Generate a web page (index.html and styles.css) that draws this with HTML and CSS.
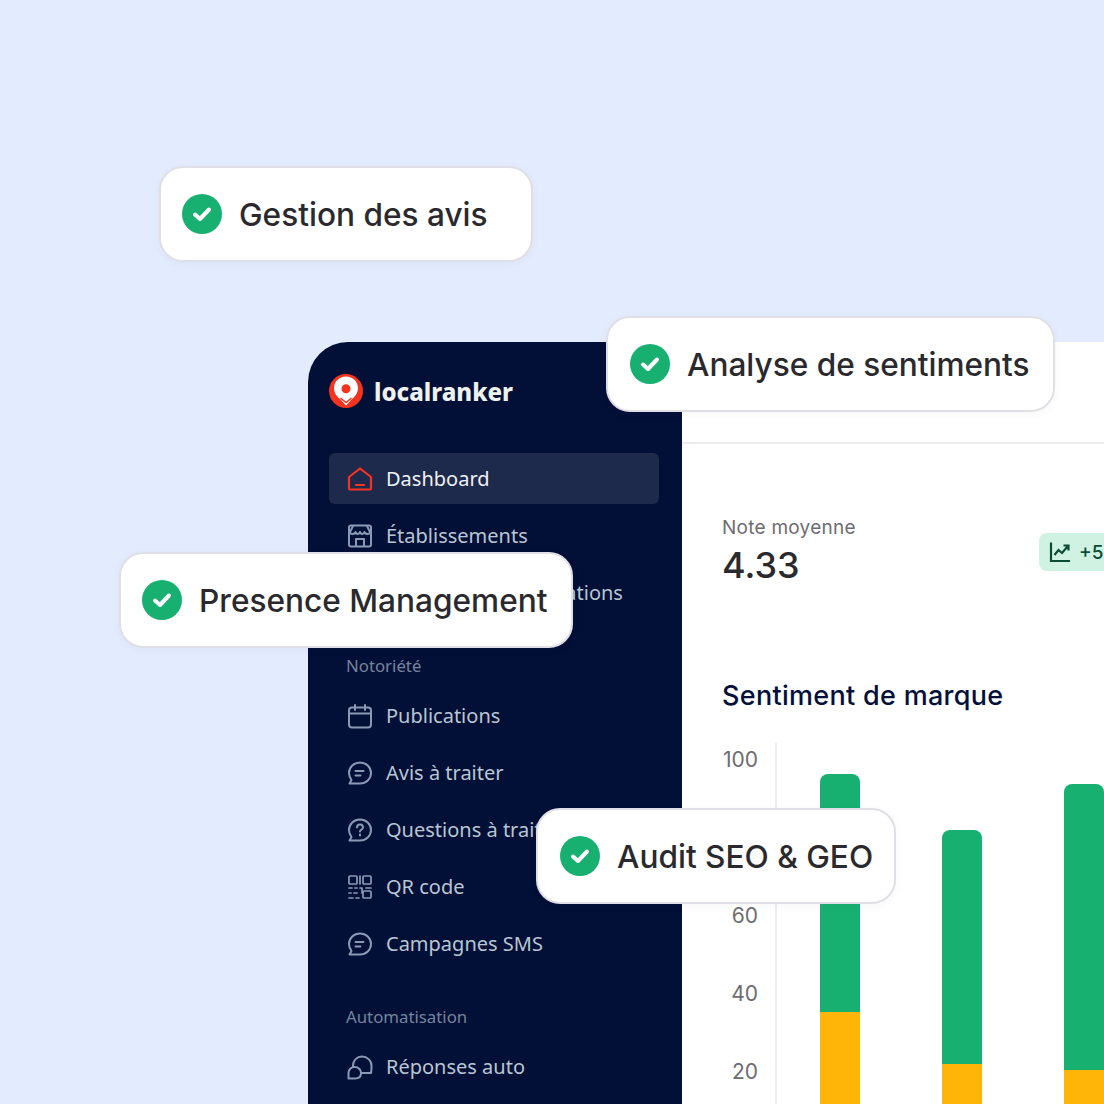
FILE: index.html
```html
<!DOCTYPE html>
<html lang="fr">
<head>
    <meta charset="UTF-8">
    <meta name="viewport" content="width=device-width, initial-scale=1.0">
    <title>Localranker</title>
    <link rel="stylesheet" href="styles.css">
</head>
<body>
    <div class="hero">
        <div class="app">
            <aside class="sidebar">
                <div class="logo">
                    <svg class="logo-mark" viewBox="0 0 34 34">
                        <circle cx="17" cy="17" r="17" fill="#f5331f"/>
                        <path d="M17 2.500c-6.600 0-12 5-12 11.500 0 5 3 8.500 6 11l6 6.500 6-6.500c3-2.500 6-6 6-11 0-6.500-5.400-11.500-12-11.500z" fill="#fff"/>
                        <circle cx="17" cy="14.700" r="4.500" fill="#f5331f"/>
                        <path d="M11.500 24l5.500 4.500 5.500-4.500" fill="none" stroke="#f5331f" stroke-width="1.500"/>
                    </svg>
                    <span>localranker</span>
                </div>
                <nav class="menu">
                    <a class="menu-item active" href="#">
                        <svg viewBox="0 0 26 26" class="icon"><path d="M2 11l11-8.500L24 11v11.500a1 1 0 0 1-1 1H3a1 1 0 0 1-1-1z M9 19h8"/></svg>
                        Dashboard
                    </a>
                    <a class="menu-item" href="#">
                        <svg viewBox="0 0 26 26" class="icon"><rect x="2" y="2.500" width="22" height="21" rx="2"/><path d="M6 3l-3 6c0 2.500 5 2.500 5.500 0C9 11.500 12.500 11.500 13 9c.5 2.500 4 2.500 4.500 0 .5 2.500 5.500 2.500 5.500 0l-3-6 M9 23v-7h8v7"/></svg>
                        Établissements
                    </a>
                    <a class="menu-item" href="#">
                        <svg viewBox="0 0 26 26" class="icon"><circle cx="13" cy="13" r="10"/></svg>
                        Gestion des informations
                    </a>
                    <p class="menu-label">Notoriété</p>
                    <a class="menu-item" href="#">
                        <svg viewBox="0 0 26 26" class="icon"><rect x="2" y="4.500" width="22" height="20" rx="3"/><path d="M2 10.500h22 M8 2v5 M18 2v5"/></svg>
                        Publications
                    </a>
                    <a class="menu-item" href="#">
                        <svg viewBox="0 0 26 26" class="icon"><path d="M13 2.500c6 0 11 4.500 11 10.500s-5 10.500-11 10.500H2.500l2-3.500C3 18 2 15.500 2 13 2 7 7 2.500 13 2.500z M8.500 11h8 M8.500 15.500h5"/></svg>
                        Avis à traiter
                    </a>
                    <a class="menu-item" href="#">
                        <svg viewBox="0 0 26 26" class="icon"><path d="M13 2.500c6 0 11 4.500 11 10.500s-5 10.500-11 10.500H2.500l2-3.500C3 18 2 15.500 2 13 2 7 7 2.500 13 2.500z M10 10.500c0-4 6-4 6 0 0 2-3 2-3 4 M13 17.500v1"/></svg>
                        Questions à traiter
                    </a>
                    <a class="menu-item" href="#">
                        <svg viewBox="0 0 26 26" class="icon thin"><rect x="2" y="2" width="8" height="8" rx="1"/><rect x="16" y="2" width="8" height="8" rx="1"/><rect x="16" y="17" width="8" height="7" rx="1"/><path d="M13 2v8 M2 14h3 M8 14h2 M13 14h2v5 M19 14h5 M2 19h2 M7 19h3 M2 24h4 M9 24h3"/></svg>
                        QR code
                    </a>
                    <a class="menu-item" href="#">
                        <svg viewBox="0 0 26 26" class="icon"><path d="M13 2.500c6 0 11 4.500 11 10.500s-5 10.500-11 10.500H2.500l2-3.500C3 18 2 15.500 2 13 2 7 7 2.500 13 2.500z M8.500 11h8 M8.500 15.500h5"/></svg>
                        Campagnes SMS
                    </a>
                    <p class="menu-label">Automatisation</p>
                    <a class="menu-item" href="#">
                        <svg viewBox="0 0 26 26" class="icon"><path d="M6 13V11.500C6 6.500 10 2.500 15 2.500s9.500 4 9.500 9c0 2.500 0 5.500-.5 7.500h-9.500 M8 13a6 6 0 0 1 6 6c0 3.500-2.500 5.500-6 5.500H1.500V19A6 6 0 0 1 8 13z"/></svg>
                        Réponses auto
                    </a>
                </nav>
            </aside>
            <main class="content">
                <div class="topbar"></div>
                <section class="score">
                    <div class="score-main">
                        <p class="score-label">Note moyenne</p>
                        <p class="score-value">4.33</p>
                    </div>
                    <div class="trend">
                        <svg viewBox="0 0 22 22" class="trend-icon"><path d="M2 1.500V20h19 M5.500 14l4-5 3.500 3 6-7 M14.500 4.500h5v5"/></svg>
                        +5
                    </div>
                </section>
                <h2 class="chart-title">Sentiment de marque</h2>
                <div class="chart">
                    <div class="axis">
                        <span>100</span>
                        <span>80</span>
                        <span>60</span>
                        <span>40</span>
                        <span>20</span>
                    </div>
                    <div class="bars">
                        <div class="bar" style="height: 330px"><div class="bar-low" style="height: 92px"></div></div>
                        <div class="bar" style="height: 274px"><div class="bar-low" style="height: 40px"></div></div>
                        <div class="bar" style="height: 320px"><div class="bar-low" style="height: 34px"></div></div>
                    </div>
                </div>
            </main>
        </div>

        <div class="tag tag-avis">
            <svg viewBox="0 0 40 40" class="check"><circle cx="20" cy="20" r="20"/><path d="M13 20.500l5 4.500 9-9.500"/></svg>
            <span>Gestion des avis</span>
        </div>
        <div class="tag tag-sentiments">
            <svg viewBox="0 0 40 40" class="check"><circle cx="20" cy="20" r="20"/><path d="M13 20.500l5 4.500 9-9.500"/></svg>
            <span>Analyse de sentiments</span>
        </div>
        <div class="tag tag-presence">
            <svg viewBox="0 0 40 40" class="check"><circle cx="20" cy="20" r="20"/><path d="M13 20.500l5 4.500 9-9.500"/></svg>
            <span>Presence Management</span>
        </div>
        <div class="tag tag-audit">
            <svg viewBox="0 0 40 40" class="check"><circle cx="20" cy="20" r="20"/><path d="M13 20.500l5 4.500 9-9.500"/></svg>
            <span>Audit SEO &amp; GEO</span>
        </div>
    </div>
</body>
</html>
```

FILE: styles.css
```css
:root {
    --navy: #020f36;
    --green: #18b070;
    --amber: #ffb508;
    --menu-text: #b9c6d3;
    --icon: #8a9ab5;
}

* {
    margin: 0;
    padding: 0;
    box-sizing: border-box;
}

body {
    background: #e3ebfe;
    font-family: 'Inter', sans-serif;
    overflow: hidden;
}

.hero {
    position: relative;
    width: 1104px;
    height: 1104px;
    overflow: hidden;
}

/* app window */
.app {
    position: absolute;
    left: 308px;
    top: 342px;
    width: 900px;
    height: 900px;
    display: flex;
    background: #fff;
    border-radius: 40px 0 0 0;
    overflow: hidden;
}

.sidebar {
    width: 374px;
    flex-shrink: 0;
    background: var(--navy);
    padding: 32px 23px 0 21px;
    font-family: 'Noto Sans', sans-serif;
}

.logo {
    display: flex;
    align-items: center;
    gap: 11px;
    height: 34px;
    color: #eef1ee;
    font-weight: 800;
    font-size: 24px;
}

.logo-mark {
    width: 34px;
    height: 34px;
}

.menu {
    margin-top: 45px;
    display: flex;
    flex-direction: column;
    gap: 6px;
}

.menu-item {
    display: flex;
    align-items: center;
    gap: 13px;
    height: 51px;
    padding-left: 18px;
    border-radius: 6px;
    color: var(--menu-text);
    font-size: 20px;
    text-decoration: none;
    white-space: nowrap;
}

.menu-item.active {
    background: #1d2a4b;
    color: #eef1f5;
}

.icon {
    width: 26px;
    height: 26px;
    flex-shrink: 0;
    fill: none;
    stroke: var(--icon);
    stroke-width: 2;
    stroke-linejoin: round;
    stroke-linecap: round;
}

.icon.thin {
    stroke-width: 1.700;
}

.active .icon {
    stroke: #f5331f;
    stroke-width: 2.200;
}

.menu-label {
    color: #76849d;
    font-size: 16.800px;
    line-height: 24px;
    padding-left: 17px;
    margin-top: 30px;
    margin-bottom: 6px;
}

/* main panel */
.content {
    flex: 1;
    padding-left: 40px;
}

.topbar {
    height: 102px;
    margin-left: -40px;
    border-bottom: 2px solid #ececf1;
}

.score {
    display: flex;
    margin-top: 71px;
}

.score-main {
    width: 317px;
    flex-shrink: 0;
}

.score-label {
    color: #6c6c72;
    font-size: 19px;
    letter-spacing: 0.25px;
    line-height: 26px;
    white-space: nowrap;
}

.score-value {
    color: #2a2a2e;
    font-size: 36px;
    font-weight: 500;
    line-height: 48px;
}

.trend {
    display: flex;
    align-items: center;
    gap: 8px;
    height: 38px;
    width: 120px;
    flex-shrink: 0;
    margin-top: 18px;
    padding-left: 10px;
    border-radius: 8px;
    background: #cff2e2;
    color: #0b4c36;
    font-size: 19px;
    font-weight: 500;
}

.trend-icon {
    width: 22px;
    height: 22px;
    fill: none;
    stroke: #0b4c36;
    stroke-width: 2.200;
}

.chart-title {
    margin-top: 89px;
    color: #04103a;
    font-size: 27px;
    font-weight: 500;
    letter-spacing: 0.3px;
    line-height: 36px;
    white-space: nowrap;
}

.chart {
    display: flex;
    height: 362px;
    margin-top: 28px;
}

.axis {
    width: 53px;
    display: flex;
    flex-direction: column;
    align-items: flex-end;
    gap: 50px;
    padding: 4px 17px 0 0;
    color: #6c6c72;
    font-size: 21px;
    line-height: 28px;
}

.bars {
    display: flex;
    align-items: flex-end;
    gap: 82px;
    padding-left: 43px;
    border-left: 2px solid #ececf1;
}

.bar {
    width: 40px;
    display: flex;
    flex-direction: column;
    justify-content: flex-end;
    background: var(--green);
    border-radius: 8px 8px 0 0;
}

.bar-low {
    background: var(--amber);
}

/* floating tags */
.tag {
    position: absolute;
    display: flex;
    align-items: center;
    gap: 17px;
    height: 96px;
    padding-left: 21px;
    background: #fff;
    border: 2px solid #e0dfe5;
    border-radius: 24px;
    color: #2a2a2e;
    font-size: 31.600px;
    font-weight: 500;
    white-space: nowrap;
    box-shadow: 0 2px 10px rgba(60, 60, 100, 0.04);
}

.tag span {
    padding-top: 1px;
}

.check {
    width: 40px;
    height: 40px;
    flex-shrink: 0;
}

.check circle {
    fill: var(--green);
}

.check path {
    fill: none;
    stroke: #fff;
    stroke-width: 4;
    stroke-linecap: round;
    stroke-linejoin: round;
}

.tag-avis { left: 159px; top: 166px; width: 374px; }
.tag-sentiments { left: 606px; top: 316px; width: 449px; padding-left: 22px; }
.tag-presence { left: 119px; top: 552px; width: 454px; }
.tag-audit { left: 536px; top: 808px; width: 360px; padding-left: 22px; }
```
